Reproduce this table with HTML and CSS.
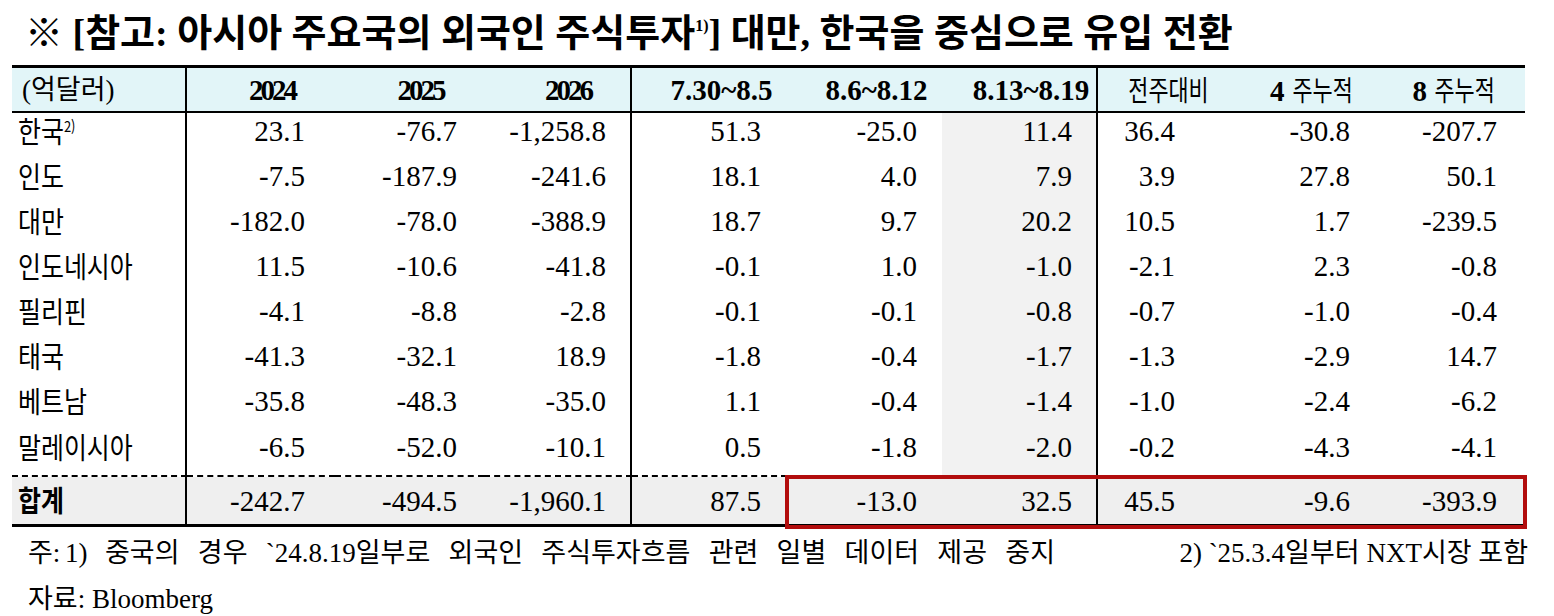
FILE: index.html
```html
<!DOCTYPE html>
<html lang="ko">
<head>
<meta charset="utf-8">
<title>아시아 주요국의 외국인 주식투자</title>
<link rel="stylesheet" href="styles.css">
</head>
<body>
<div class="page">
  <h1 class="title">※ [참고: 아시아 주요국의 외국인 주식투자<sup class="tsup">1)</sup>] 대만, 한국을 중심으로 유입 전환</h1>
  <div class="tablewrap">
    <table class="flow">
      <colgroup>
        <col class="w-lbl"><col class="w-a"><col class="w-a2"><col class="w-a">
        <col class="w-b"><col class="w-b"><col class="w-b2">
        <col class="w-c"><col class="w-c2"><col class="w-c">
      </colgroup>
      <thead>
        <tr>
          <th class="h-lbl vl">(억달러)</th>
          <th class="yr">2024</th>
          <th class="yr">2025</th>
          <th class="yr vl">2026</th>
          <th class="dt">7.30~8.5</th>
          <th class="dt">8.6~8.12</th>
          <th class="dt vl">8.13~8.19</th>
          <th class="kh"><span class="kc">전주대비</span></th>
          <th class="kh"><b class="hn">4</b> <span class="kc">주누적</span></th>
          <th class="kh"><b class="hn">8</b> <span class="kc">주누적</span></th>
        </tr>
      </thead>
      <tbody>
        <tr><td class="lbl vl"><span class="k">한국<sup class="lsup">2)</sup></span></td><td class="c1">23.1</td><td class="c2">-76.7</td><td class="c3 vl">-1,258.8</td><td class="c4">51.3</td><td class="c5">-25.0</td><td class="c6 g vl">11.4</td><td class="c7">36.4</td><td class="c8">-30.8</td><td class="c9">-207.7</td></tr>
        <tr><td class="lbl vl"><span class="k">인도</span></td><td class="c1">-7.5</td><td class="c2">-187.9</td><td class="c3 vl">-241.6</td><td class="c4">18.1</td><td class="c5">4.0</td><td class="c6 g vl">7.9</td><td class="c7">3.9</td><td class="c8">27.8</td><td class="c9">50.1</td></tr>
        <tr><td class="lbl vl"><span class="k">대만</span></td><td class="c1">-182.0</td><td class="c2">-78.0</td><td class="c3 vl">-388.9</td><td class="c4">18.7</td><td class="c5">9.7</td><td class="c6 g vl">20.2</td><td class="c7">10.5</td><td class="c8">1.7</td><td class="c9">-239.5</td></tr>
        <tr><td class="lbl vl"><span class="k">인도네시아</span></td><td class="c1">11.5</td><td class="c2">-10.6</td><td class="c3 vl">-41.8</td><td class="c4">-0.1</td><td class="c5">1.0</td><td class="c6 g vl">-1.0</td><td class="c7">-2.1</td><td class="c8">2.3</td><td class="c9">-0.8</td></tr>
        <tr><td class="lbl vl"><span class="k">필리핀</span></td><td class="c1">-4.1</td><td class="c2">-8.8</td><td class="c3 vl">-2.8</td><td class="c4">-0.1</td><td class="c5">-0.1</td><td class="c6 g vl">-0.8</td><td class="c7">-0.7</td><td class="c8">-1.0</td><td class="c9">-0.4</td></tr>
        <tr><td class="lbl vl"><span class="k">태국</span></td><td class="c1">-41.3</td><td class="c2">-32.1</td><td class="c3 vl">18.9</td><td class="c4">-1.8</td><td class="c5">-0.4</td><td class="c6 g vl">-1.7</td><td class="c7">-1.3</td><td class="c8">-2.9</td><td class="c9">14.7</td></tr>
        <tr><td class="lbl vl"><span class="k">베트남</span></td><td class="c1">-35.8</td><td class="c2">-48.3</td><td class="c3 vl">-35.0</td><td class="c4">1.1</td><td class="c5">-0.4</td><td class="c6 g vl">-1.4</td><td class="c7">-1.0</td><td class="c8">-2.4</td><td class="c9">-6.2</td></tr>
        <tr class="last"><td class="lbl vl"><span class="k">말레이시아</span></td><td class="c1">-6.5</td><td class="c2">-52.0</td><td class="c3 vl">-10.1</td><td class="c4">0.5</td><td class="c5">-1.8</td><td class="c6 g vl">-2.0</td><td class="c7">-0.2</td><td class="c8">-4.3</td><td class="c9">-4.1</td></tr>
      </tbody>
      <tfoot>
        <tr><td class="lbl vl"><span class="k kb">합계</span></td><td class="c1">-242.7</td><td class="c2">-494.5</td><td class="c3 vl">-1,960.1</td><td class="c4">87.5</td><td class="c5">-13.0</td><td class="c6 vl">32.5</td><td class="c7">45.5</td><td class="c8">-9.6</td><td class="c9">-393.9</td></tr>
      </tfoot>
    </table>
    <div class="highlight"></div>
  </div>
  <div class="notes">
    <p class="note1"><span class="n0">주: 1)</span><span class="n1">중국의 경우 `24.8.19일부로 외국인 주식투자흐름 관련 일별 데이터 제공 중지</span><span class="n2">2) `25.3.4일부터 NXT시장 포함</span></p>
    <p class="note2">자료: Bloomberg</p>
  </div>
</div>
</body>
</html>
```
FILE: styles.css
```css
html, body {
  margin: 0;
  padding: 0;
  background: #ffffff;
  color: #000000;
  font-family: "Liberation Serif", "Noto Sans CJK KR", serif;
}

.page {
  width: 1554px;
  height: 616px;
  overflow: hidden;
}

.title {
  margin: 0;
  padding: 10px 0 0 25px;
  height: 55px;
  font-family: "Liberation Serif", "Noto Sans CJK KR", sans-serif;
  font-size: 38px;
  font-weight: 700;
  line-height: 46px;
  white-space: nowrap;
}

.tsup {
  font-size: 16px;
  font-weight: 700;
  vertical-align: 15px;
  line-height: 0;
}

.tablewrap {
  position: relative;
  margin-left: 12px;
  width: 1513px;
}

.flow {
  border-collapse: separate;
  border-spacing: 0;
  table-layout: fixed;
  width: 1513px;
}

.w-lbl { width: 175px; }
.w-a { width: 148px; }
.w-a2 { width: 149px; }
.w-b { width: 155px; }
.w-b2 { width: 156px; }
.w-c { width: 142px; }
.w-c2 { width: 143px; }

.flow th,
.flow td {
  padding: 0;
  box-sizing: border-box;
  white-space: nowrap;
  overflow: visible;
  line-height: 32px;
}

.flow thead tr { height: 48px; }

.flow thead th {
  background: #e2f5f8;
  border-top: 3px solid #000;
  border-bottom: 2px solid #000;
  vertical-align: middle;
  text-align: center;
  font-size: 29px;
  font-weight: 700;
}

.flow .vl { border-right: 2px solid #000; }

.flow th.h-lbl {
  text-align: left;
  padding-left: 10px;
  font-size: 27px;
  font-weight: 400;
}

.flow th.yr {
  letter-spacing: -3px;
  padding-left: 22px;
}

.flow th.dt {
  padding-left: 24px;
}

.flow th.kh {
  font-weight: 400;
}

.hn {
  font-weight: 700;
  font-size: 29px;
}

.kc {
  display: inline-block;
  font-family: "Noto Sans CJK KR", sans-serif;
  font-size: 28px;
  font-weight: 400;
  transform: scaleX(0.78);
  transform-origin: center;
  margin: 0 -8px;
}

.flow tbody tr { height: 45px; }
.flow tbody tr.last { height: 49px; }

.flow tbody td {
  vertical-align: middle;
  text-align: right;
  font-size: 29px;
  padding-bottom: 9px;
}

.flow tbody tr.last td {
  border-bottom: 2px dashed #000;
}

.flow td.g { background: #f2f2f2; }

.flow td.lbl {
  text-align: left;
  padding-left: 6px;
}

.k {
  display: inline-block;
  font-family: "Noto Sans CJK KR", sans-serif;
  font-size: 29px;
  transform: scaleX(0.86);
  transform-origin: left center;
}

.kb { font-weight: 700; }

.lsup {
  font-size: 15px;
  vertical-align: 11px;
  line-height: 0;
}

.flow td.c1 { padding-right: 30px; }
.flow td.c2 { padding-right: 27px; }
.flow td.c3 { padding-right: 24px; }
.flow td.c4 { padding-right: 26px; }
.flow td.c5 { padding-right: 25px; }
.flow td.c6 { padding-right: 24px; }
.flow td.c7 { padding-right: 65px; }
.flow td.c8 { padding-right: 33px; }
.flow td.c9 { padding-right: 28px; }

.flow tfoot tr { height: 50px; }

.flow tfoot td {
  background: #efefef;
  border-bottom: 3px solid #000;
  vertical-align: middle;
  text-align: right;
  font-size: 29px;
}

.flow tfoot td.lbl { text-align: left; padding-left: 6px; }

.highlight {
  position: absolute;
  left: 773px;
  top: 410px;
  width: 742px;
  height: 54px;
  box-sizing: border-box;
  border: 4.5px solid #b20d0d;
  pointer-events: none;
}

.notes {
  padding-left: 28px;
  padding-top: 3px;
  font-size: 27px;
}

.notes p {
  margin: 0;
  line-height: 46px;
  white-space: nowrap;
}

.note1 {
  display: flex;
  width: 1500px;
}

.n0 {
  width: 77px;
  word-spacing: -2px;
}

.n1 {
  display: inline-block;
  width: 950px;
  text-align: justify;
  text-align-last: justify;
}

.n2 {
  margin-left: auto;
}
```
